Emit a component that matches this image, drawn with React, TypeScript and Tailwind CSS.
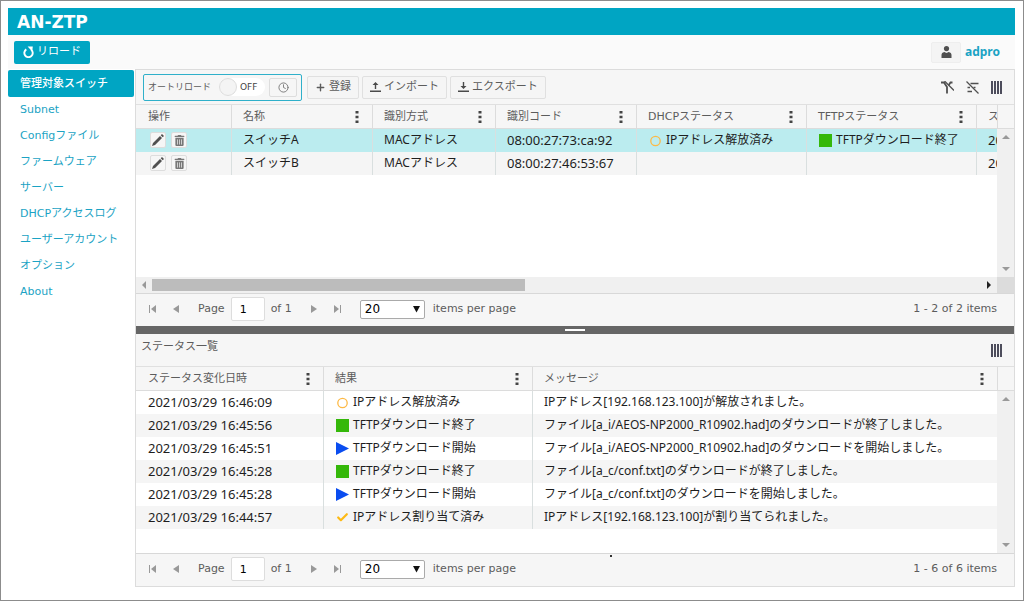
import { Check, Clock, Plus } from "lucide-react";
import { useState } from "react";
import type { ReactNode } from "react";
import { FaTrashAlt } from "react-icons/fa";

const menuItems = [
  "管理対象スイッチ",
  "Subnet",
  "Configファイル",
  "ファームウェア",
  "サーバー",
  "DHCPアクセスログ",
  "ユーザーアカウント",
  "オプション",
  "About",
];

type Status = "released" | "done" | "started" | "assigned";

const statusLabels: Record<Status, string> = {
  released: "IPアドレス解放済み",
  done: "TFTPダウンロード終了",
  started: "TFTPダウンロード開始",
  assigned: "IPアドレス割り当て済み",
};

const switches: {
  name: string;
  method: string;
  code: string;
  dhcp?: Status;
  tftp?: Status;
  changed: string;
}[] = [
  {
    name: "スイッチA",
    method: "MACアドレス",
    code: "08:00:27:73:ca:92",
    dhcp: "released",
    tftp: "done",
    changed: "20",
  },
  {
    name: "スイッチB",
    method: "MACアドレス",
    code: "08:00:27:46:53:67",
    changed: "20",
  },
];

const history: { time: string; status: Status; message: string }[] = [
  {
    time: "2021/03/29 16:46:09",
    status: "released",
    message: "IPアドレス[192.168.123.100]が解放されました。",
  },
  {
    time: "2021/03/29 16:45:56",
    status: "done",
    message: "ファイル[a_i/AEOS-NP2000_R10902.had]のダウンロードが終了しました。",
  },
  {
    time: "2021/03/29 16:45:51",
    status: "started",
    message: "ファイル[a_i/AEOS-NP2000_R10902.had]のダウンロードを開始しました。",
  },
  {
    time: "2021/03/29 16:45:28",
    status: "done",
    message: "ファイル[a_c/conf.txt]のダウンロードが終了しました。",
  },
  {
    time: "2021/03/29 16:45:28",
    status: "started",
    message: "ファイル[a_c/conf.txt]のダウンロードを開始しました。",
  },
  {
    time: "2021/03/29 16:44:57",
    status: "assigned",
    message: "IPアドレス[192.168.123.100]が割り当てられました。",
  },
];

function StatusIcon({ status }: { status: Status }) {
  if (status === "assigned") {
    return <Check size={13} strokeWidth={4} color="#fdb913" />;
  }
  return (
    <svg width="13" height="13" viewBox="0 0 13 13" aria-hidden="true">
      {status === "released" && (
        <circle cx="6.5" cy="7" r="4.7" fill="none" stroke="#fdb945" strokeWidth="1.3" />
      )}
      {status === "done" && <rect width="13" height="13" fill="#35b80a" />}
      {status === "started" && <path d="M0 0 13 6.5 0 13z" fill="#0a4df0" />}
    </svg>
  );
}

function StatusText({ status }: { status: Status }) {
  return (
    <span className="flex items-center gap-1 pl-px">
      <StatusIcon status={status} />
      {statusLabels[status]}
    </span>
  );
}

function ColumnsButton() {
  return (
    <button type="button" aria-label="列の選択">
      <svg width="11" height="13" viewBox="0 0 11 13" fill="#4d4d5c">
        <path d="M0 0h2v13H0zM3 0h2v13H3zM6 0h2v13H6zM9 0h2v13H9z" />
      </svg>
    </button>
  );
}

function HeaderCell({ label, menu = true }: { label: string; menu?: boolean }) {
  return (
    <th className="h-[24px] overflow-hidden border-r border-b border-[#dcdcdc] p-0 pr-[13px] pl-[11px] text-left font-normal whitespace-nowrap first:pl-3 last:border-r-0">
      <span className="flex items-center justify-between">
        {label}
        {menu && (
          <button type="button" aria-label={`${label} メニュー`}>
            <svg width="4" height="12" viewBox="0 0 4 12" fill="#444">
              <path d="M.5 0h3v2.6h-3zM.5 4.7h3v2.6h-3zM.5 9.4h3V12h-3z" />
            </svg>
          </button>
        )}
      </span>
    </th>
  );
}

function Cell({ children, numeric = false }: { children?: ReactNode; numeric?: boolean }) {
  return (
    <td
      className={`h-[23px] overflow-hidden border-r border-[#d9dfdf] p-0 pl-[11px] leading-4 whitespace-nowrap first:pl-3 last:border-r-0 ${
        numeric ? "pb-[2px] text-[13px]" : "pb-px text-[12px]"
      }`}
    >
      {children}
    </td>
  );
}

function Arrow({ dir, color = "#999" }: { dir: "up" | "down" | "left" | "right"; color?: string }) {
  const paths = {
    up: "M0 6 4 2l4 4z",
    down: "M0 2h8L4 6z",
    left: "M6 0v8L2 4z",
    right: "M2 0v8l4-4z",
  };
  return (
    <svg width="8" height="8" viewBox="0 0 8 8" fill={color} aria-hidden="true">
      <path d={paths[dir]} />
    </svg>
  );
}

// Header spacer above a vertical scroll track
function VerticalScroll() {
  return (
    <div className="flex w-[17px] shrink-0 flex-col">
      <div className="h-[24px] border-b border-l border-[#dcdcdc]" />
      <div className="flex flex-1 flex-col items-center justify-between bg-[#f0f0f0] py-1">
        <Arrow dir="up" />
        <Arrow dir="down" />
      </div>
    </div>
  );
}

function PagerButton({ label, path }: { label: string; path: string }) {
  return (
    <button type="button" aria-label={label} className="flex w-[23px] justify-center">
      <svg width="8" height="8" viewBox="0 0 8 8" fill="#999">
        <path d={path} />
      </svg>
    </button>
  );
}

function Pager({ summary, id }: { summary: string; id: string }) {
  return (
    <div className="flex h-[33px] shrink-0 items-center border-t border-[#d8d8d8] pr-[17px] pb-[2px] pl-[5px]">
      <PagerButton label="最初のページ" path="M0 0h1v8H0zM7 0v8L2 4z" />
      <PagerButton label="前のページ" path="M7 0v8L1 4z" />
      <label htmlFor={`${id}-page`} className="ml-[11px]">
        Page
      </label>
      <input
        id={`${id}-page`}
        defaultValue="1"
        className="ml-[6px] h-6 w-[34px] rounded-xs border border-[#ddd] bg-white px-2 text-black"
      />
      <span className="mr-[11px] ml-[6px]">of 1</span>
      <PagerButton label="次のページ" path="M1 0v8l6-4z" />
      <PagerButton label="最後のページ" path="M7 0h1v8H7zM1 0v8l5-4z" />
      <span className="relative ml-[11px]">
        <select
          id={`${id}-size`}
          defaultValue="20"
          className="block h-[19px] w-[65px] appearance-none rounded-xs border border-[#aaa] bg-white pl-1 text-[12px] leading-4 text-black"
        >
          <option>20</option>
          <option>50</option>
          <option>100</option>
        </select>
        <svg
          className="pointer-events-none absolute top-[6px] right-[5px]"
          width="7"
          height="7"
          viewBox="0 0 7 7"
          fill="#111"
        >
          <path d="M0 0h7L3.5 6.500z" />
        </svg>
      </span>
      <label htmlFor={`${id}-size`} className="ml-2">
        items per page
      </label>
      <span className="ml-auto">{summary}</span>
    </div>
  );
}

const toolButton =
  "flex h-[23px] items-center gap-[3px] rounded-xs border border-[#e0e0e0] bg-[#f5f5f5] px-[7px]";

const rowButton =
  "flex h-4 w-4 items-center justify-center rounded-xs border border-[#ddd] bg-[#f6f6f6]";

export default function App() {
  const [autoReload, setAutoReload] = useState(false);

  return (
    <div className="flex min-h-screen flex-col border border-[#8c8c8c] bg-white pt-[7px] pr-2 pb-[13px] pl-[7px] font-['DejaVu_Sans','Noto_Sans_CJK_JP',sans-serif] text-[11px] leading-4 text-[#5c5c5c]">
      <header>
        <div className="flex h-[27px] items-center bg-[#00a5c3] px-[9px]">
          <h1 className="text-[17px] leading-5 font-bold text-white">AN-ZTP</h1>
        </div>
        <div className="flex h-[34px] items-center justify-between bg-[#fafafa] pr-[15px] pl-[6px]">
          <button
            type="button"
            className="flex h-[23px] items-center gap-[3px] rounded-xs bg-[#00a5c3] px-[9px] text-white"
          >
            <svg width="11" height="12" viewBox="0 0 11 12" fill="none" stroke="#fff">
              <path d="M3.3 3.4A4.2 4.2 0 1 0 8.2 3.7" strokeWidth="1.9" />
              <path d="M4.600.6h5.200l-.6 5z" fill="#fff" stroke="none" />
            </svg>
            リロード
          </button>
          <div className="flex items-center gap-1">
            <button
              type="button"
              aria-label="ユーザー"
              className="flex h-[21px] w-[30px] items-center justify-center rounded-xs border border-[#eee] bg-[#f4f4f4]"
            >
              <svg width="11" height="12" viewBox="0 0 11 12" fill="#505050">
                <circle cx="5.5" cy="2.6" r="2.6" />
                <path d="M.5 12V9Q.5 6.500 3.300 6L5.500 7 7.700 6Q10.500 6.500 10.500 9V12z" />
              </svg>
            </button>
            <a href="#user" className="font-['Noto_Sans',sans-serif] text-[12px] font-bold text-[#1ba3c4]">
              adpro
            </a>
          </div>
        </div>
      </header>

      <div className="flex flex-1">
        <nav className="flex w-[127px] shrink-0 flex-col pt-px">
          {menuItems.map((item, i) => (
            <a
              key={item}
              href="#menu"
              className={`flex items-center pl-3 whitespace-nowrap ${
                i === 0
                  ? "mr-px h-[27px] rounded-xs bg-[#00a5c3] font-medium text-white"
                  : "h-[26px] text-[#1ba3c4]"
              }`}
            >
              {item}
            </a>
          ))}
        </nav>

        <main className="flex min-w-0 flex-1 flex-col border border-[#dcdcdc] bg-[#f6f6f6]">
          {/* Managed switches */}
          <div className="flex h-[35px] items-center gap-[3px] border-b border-[#e0e0e0] pr-3 pl-[7px]">
            <div className="mr-[2px] flex h-[27px] items-center rounded-xs border border-[#2fb0ca] px-1">
              <span id="auto-label" className="mr-2 text-[9px]">
                オートリロード
              </span>
              <button
                type="button"
                role="switch"
                aria-checked={autoReload}
                aria-labelledby="auto-label"
                onClick={() => setAutoReload(!autoReload)}
                className="flex h-[18px] w-[46px] items-center gap-[3px] rounded-full bg-white text-[9px] text-[#444]"
              >
                <span className="h-[18px] w-[18px] rounded-full border border-[#ddd] bg-[#f4f4f4]" />
                {autoReload ? "ON" : "OFF"}
              </button>
              <button
                type="button"
                aria-label="間隔"
                className="ml-1 flex h-[19px] w-[28px] items-center justify-center rounded-xs border border-[#ddd]"
              >
                <Clock size={11} color="#777" />
              </button>
            </div>
            <button type="button" className={toolButton}>
              <Plus size={11} strokeWidth={3} />
              登録
            </button>
            <button type="button" className={toolButton}>
              <svg width="11" height="10" viewBox="0 0 11 10" fill="#4a4a4a">
                <path d="M5.500 0 8.500 3H6.200v4H4.800V3H2.500zM0 8.500h11V10H0z" />
              </svg>
              インポート
            </button>
            <button type="button" className={toolButton}>
              <svg width="11" height="10" viewBox="0 0 11 10" fill="#4a4a4a">
                <path d="M5.500 7 8.500 4H6.200V0H4.800v4H2.500zM0 8.500h11V10H0z" />
              </svg>
              エクスポート
            </button>
            <div className="ml-auto flex items-center gap-3">
              <button type="button" aria-label="フィルター解除">
                <svg width="13" height="13" viewBox="0 0 13 13" fill="none" stroke="#505050">
                  <path d="M0 1.5h3L6 6v6.500M11.500 1.500H9.500L7.500 4.500" strokeWidth="1.8" />
                  <path d="M3.500 0 13 9.500" strokeWidth="1.3" />
                </svg>
              </button>
              <button type="button" aria-label="ソート解除">
                <svg width="13" height="13" viewBox="0 0 13 13" fill="none" stroke="#505050">
                  <path d="M4.500 2.500h8M1.500 6.500H4M7.500 6.500H9.500M1.500 10.500h4.500" strokeWidth="1.5" />
                  <path d="M.5 .5 12.500 12.500" strokeWidth="1.3" />
                </svg>
              </button>
              <ColumnsButton />
            </div>
          </div>

          <div className="flex min-h-[172px]">
            <div className="min-w-0 flex-1 overflow-hidden bg-white">
              <table className="w-[870px] table-fixed border-separate border-spacing-0">
                <colgroup>
                  <col className="w-[96px]" />
                  <col className="w-[141px]" />
                  <col className="w-[123px]" />
                  <col className="w-[141px]" />
                  <col className="w-[170px]" />
                  <col className="w-[170px]" />
                  <col />
                </colgroup>
                <thead className="bg-[#f6f6f6]">
                  <tr>
                    <HeaderCell label="操作" menu={false} />
                    <HeaderCell label="名称" />
                    <HeaderCell label="識別方式" />
                    <HeaderCell label="識別コード" />
                    <HeaderCell label="DHCPステータス" />
                    <HeaderCell label="TFTPステータス" />
                    <HeaderCell label="ス" menu={false} />
                  </tr>
                </thead>
                <tbody className="font-['Noto_Sans','Noto_Sans_CJK_JP',sans-serif] text-[#1e1e1e]">
                  {switches.map((sw, i) => (
                    <tr key={sw.name} className={i === 0 ? "bg-[#bbecef]" : "bg-[#f5f5f5]"}>
                      <Cell>
                        <span className="flex gap-[5px] pl-[2px]">
                          <button type="button" aria-label="編集" className={rowButton}>
                            <svg width="12" height="12" viewBox="0 0 12 12" fill="#505050">
                              <path d="M0 12 1 9 8 2 10 4 3 11zM8.700 1.300 10 0 12 2l-1.300 1.300z" />
                            </svg>
                          </button>
                          <button type="button" aria-label="削除" className={rowButton}>
                            <FaTrashAlt size={11} color="#777" />
                          </button>
                        </span>
                      </Cell>
                      <Cell>{sw.name}</Cell>
                      <Cell>{sw.method}</Cell>
                      <Cell numeric>{sw.code}</Cell>
                      <Cell>{sw.dhcp && <StatusText status={sw.dhcp} />}</Cell>
                      <Cell>{sw.tftp && <StatusText status={sw.tftp} />}</Cell>
                      <Cell numeric>{sw.changed}</Cell>
                    </tr>
                  ))}
                </tbody>
              </table>
            </div>
            <VerticalScroll />
          </div>
          <div className="flex h-4 items-center bg-[#f0f0f0]">
            <span className="flex w-4 justify-center">
              <Arrow dir="left" />
            </span>
            <div className="flex-1">
              <div className="h-3 w-[45%] bg-[#bcbcbc]" />
            </div>
            <span className="flex w-4 justify-center">
              <Arrow dir="right" color="#222" />
            </span>
            <span className="h-4 w-[17px] bg-[#dcdcdc]" />
          </div>
          <Pager id="switches" summary="1 - 2 of 2 items" />

          <div className="flex h-2 shrink-0 items-center justify-center bg-[#666]">
            <span className="h-[2px] w-5 bg-white" />
          </div>

          {/* Status history */}
          <div className="flex h-[33px] items-center justify-between border-b border-[#e0e0e0] pr-3 pl-[5px]">
            <h2 className="pb-[6px]">ステータス一覧</h2>
            <ColumnsButton />
          </div>
          <div className="flex flex-1">
            <div className="min-w-0 flex-1 overflow-hidden bg-white">
              <table className="w-full table-fixed border-separate border-spacing-0">
                <colgroup>
                  <col className="w-[188px]" />
                  <col className="w-[209px]" />
                  <col />
                </colgroup>
                <thead className="bg-[#f6f6f6]">
                  <tr>
                    <HeaderCell label="ステータス変化日時" />
                    <HeaderCell label="結果" />
                    <HeaderCell label="メッセージ" />
                  </tr>
                </thead>
                <tbody className="font-['Noto_Sans','Noto_Sans_CJK_JP',sans-serif] text-[#1e1e1e]">
                  {history.map((row) => (
                    <tr key={row.time + row.status} className="even:bg-[#f5f5f5]">
                      <Cell numeric>{row.time}</Cell>
                      <Cell>
                        <StatusText status={row.status} />
                      </Cell>
                      <Cell>{row.message}</Cell>
                    </tr>
                  ))}
                </tbody>
              </table>
            </div>
            <VerticalScroll />
          </div>
          <div className="relative">
            <span className="absolute top-[2px] left-[54%] h-[2px] w-[2px] bg-[#333]" />
            <Pager id="history" summary="1 - 6 of 6 items" />
          </div>
        </main>
      </div>
    </div>
  );
}
